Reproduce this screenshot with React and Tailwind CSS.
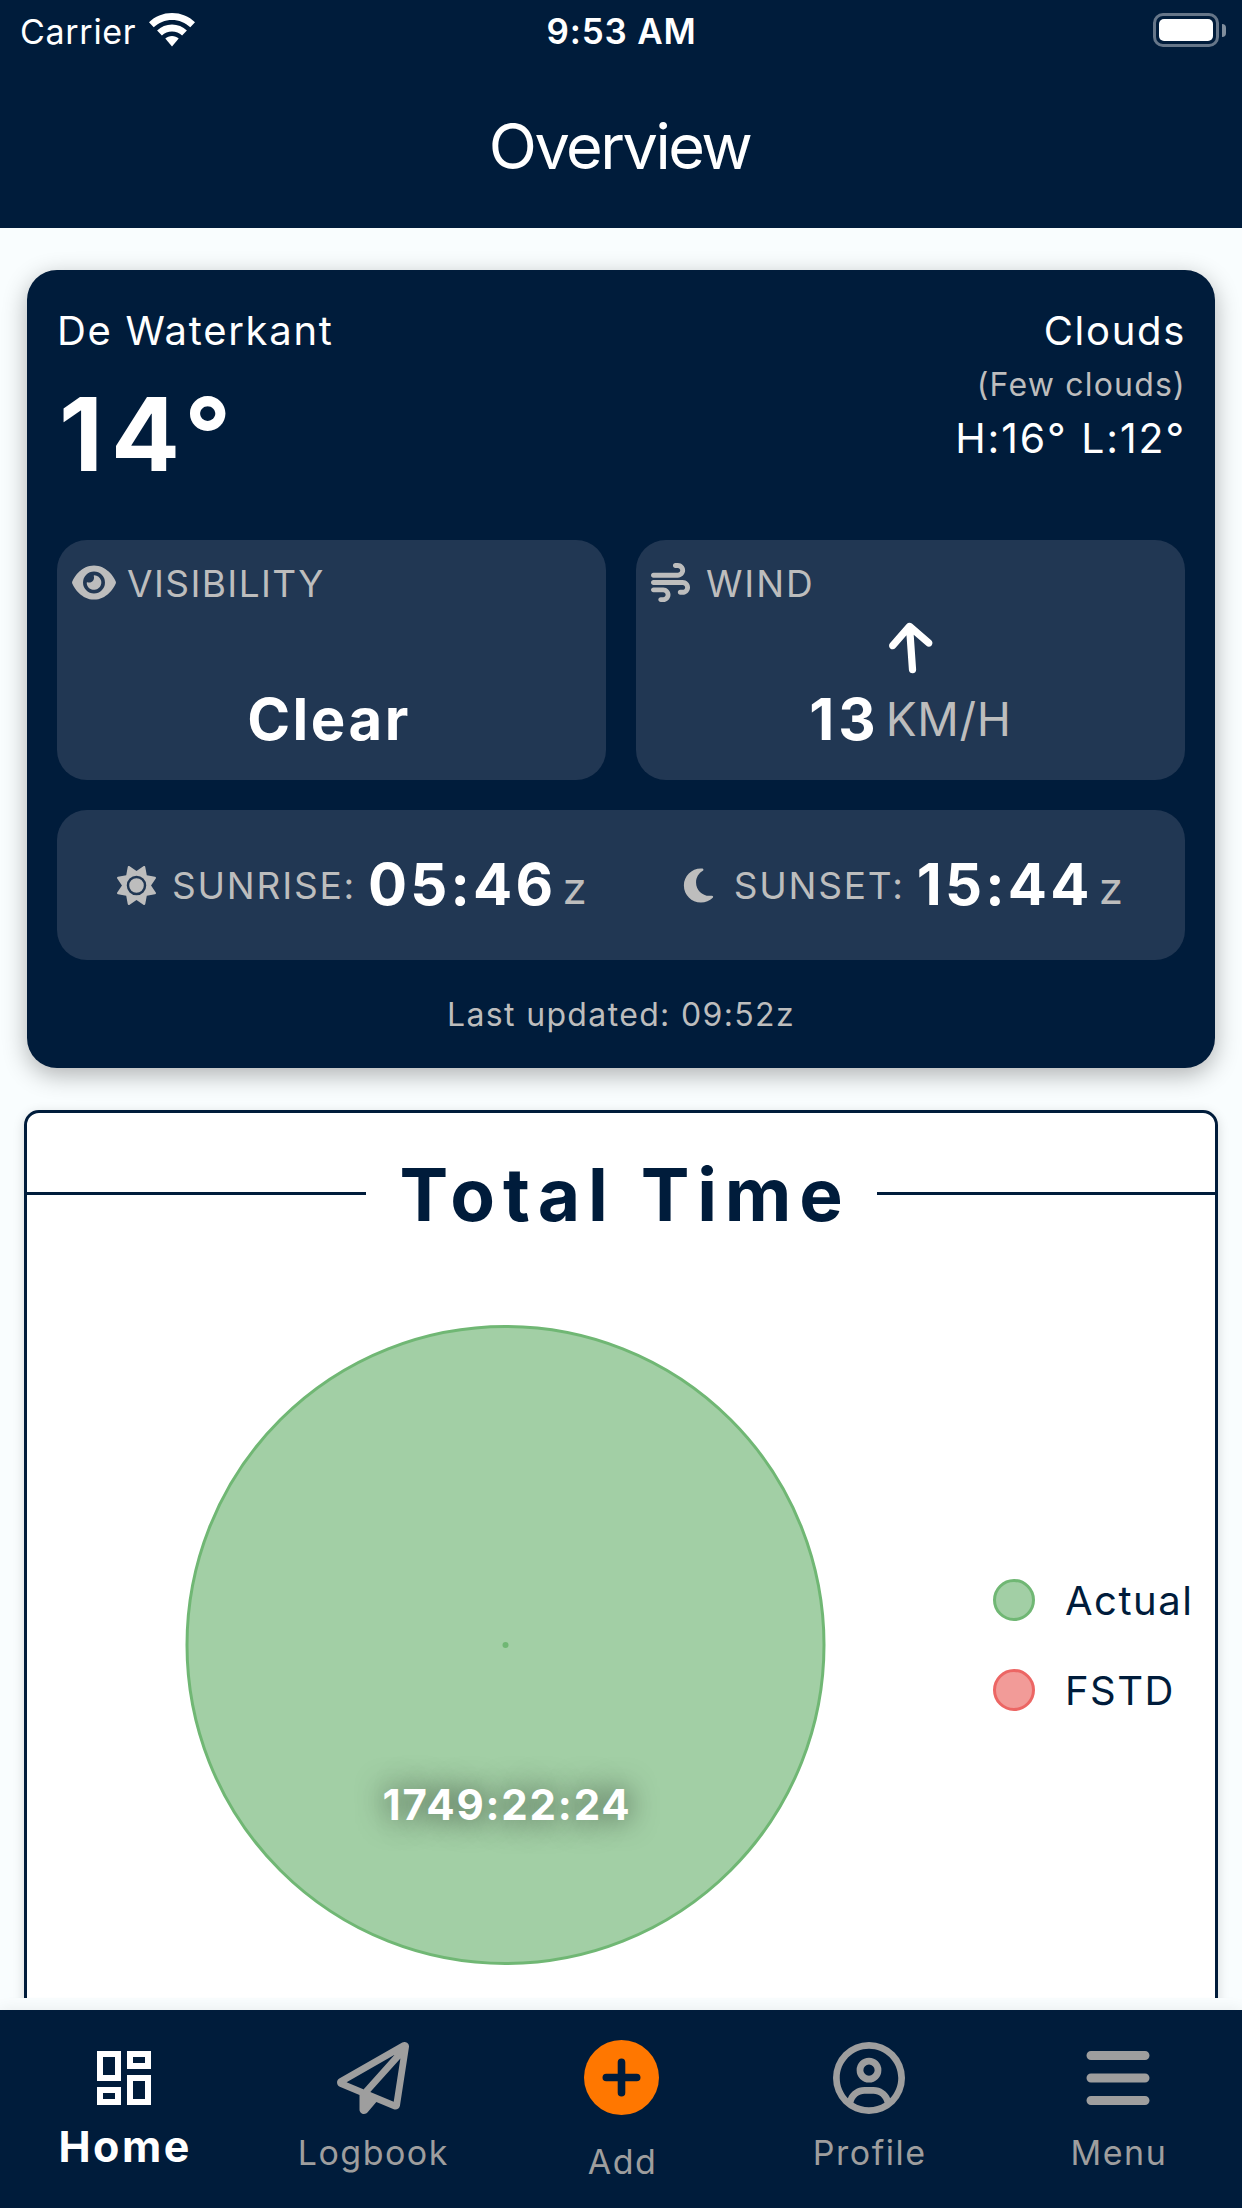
import { FaEye, FaWind, FaSun, FaMoon, FaRegPaperPlane, FaRegCircleUser, FaBars, FaArrowUp } from "react-icons/fa6";
import { MdOutlineDashboard } from "react-icons/md";

function AddIcon({ className }) {
  return (
    <svg viewBox="0 0 75 75" className={className}>
      <circle cx="37.500" cy="37.500" r="37.500" fill="#ff7700" />
      <path d="M37.500 22.300v30.400M22.300 37.500h30.400" stroke="#001c3b" strokeWidth="7.600" strokeLinecap="round" />
    </svg>
  );
}

const navItems = [
  { label: "Home", icon: MdOutlineDashboard, iconClass: "-ml-[2px] size-[72px]", labelClass: "text-[43px] font-bold tracking-[2.500px]", active: true },
  { label: "Logbook", icon: FaRegPaperPlane, iconClass: "size-[72px]", labelClass: "mt-[13px] text-[34px] tracking-[1.500px]" },
  { label: "Add", icon: AddIcon, iconClass: "-mt-[2px] size-[75px]", labelClass: "mt-[21px] pl-[2px] text-[34px] tracking-[1.500px]" },
  { label: "Profile", icon: FaRegCircleUser, iconClass: "-ml-[2px] size-[72px]", labelClass: "mt-[13px] text-[34px] tracking-[1.500px]" },
  { label: "Menu", icon: FaBars, iconClass: "size-[72px]", labelClass: "mt-[13px] pl-[2px] text-[34px] tracking-[1.500px]" },
];

const legend = [
  { label: "Actual", dot: "border-[#70b774] bg-[#a2cfa5]" },
  { label: "FSTD", dot: "border-[#ec6664] bg-[#f29b98]" },
];

function StatusBar() {
  return (
    <div className="flex h-[60px] items-center justify-between pl-[20px] pr-[16px] text-[34px]">
      <div className="flex w-[300px] items-center gap-[13px]">
        <span className="pt-[3px] tracking-[0.7px]">Carrier</span>
        <svg viewBox="0 0 46 34" className="h-[34px] w-[46px] fill-white">
          <path d="M23 0C14 0 6 3.400 0 9.300L4.700 14.300C9.600 9.600 16 7 23 7s13.400 2.600 18.300 7.300L46 9.300C40 3.400 32 0 23 0Z" />
          <path d="M23 11.500c-5.700 0-10.900 2.200-14.900 5.900l4.800 5c2.700-2.400 6.200-3.900 10.100-3.900s7.400 1.500 10.100 3.900l4.800-5c-4-3.700-9.200-5.900-14.900-5.900Z" />
          <path d="M23 23c-2.600 0-4.900 1-6.700 2.500L23 33.500l6.700-8C27.900 24 25.600 23 23 23Z" />
        </svg>
      </div>
      <span className="pt-[3px] pr-[3px] text-[35px] font-semibold tracking-[0.8px]">9:53 AM</span>
      <div className="flex w-[300px] items-center justify-end gap-[3px]">
        <div className="h-[34px] w-[66px] rounded-[10px] border-[3px] border-white/40 p-[3px]">
          <div className="h-full rounded-[5px] bg-white" />
        </div>
        <div className="h-[13px] w-[4px] rounded-r-full bg-white/50" />
      </div>
    </div>
  );
}

function SunTime({ icon: Icon, label, time }) {
  return (
    <div className="flex items-center">
      <Icon className="size-[39px] text-[#bdbdbd]" />
      <span className="ml-[16px] mt-[2px] text-[37px] tracking-[1.800px] text-[#bdbdbd]">{label}:</span>
      <span className="ml-[12px] -mt-[2px] text-[58px] font-bold tracking-[3.200px]">{time}</span>
      <span className="ml-[6px] mt-[6px] text-[44px] text-[#bdbdbd]">z</span>
    </div>
  );
}

function WeatherCard() {
  return (
    <section className="mx-[27px] h-[798px] rounded-[30px] bg-[#001c3b] px-[30px] text-white shadow-[0_7px_24px_rgba(0,0,0,0.3)]">
      <div className="flex h-[270px] justify-between pt-[34px]">
        <div>
          <p className="text-[40px] leading-[54px] tracking-[1.700px]">De Waterkant</p>
          <p className="mt-[16px] ml-[2px] text-[102px] leading-[120px] font-bold tracking-[8px]">14°</p>
        </div>
        <div className="-mr-[1px] text-right">
          <p className="text-[40px] leading-[54px] tracking-[1.700px]">Clouds</p>
          <p className="text-[32px] leading-[54px] tracking-[1.200px] text-[#bdbdbd]">(Few clouds)</p>
          <p className="-mt-[1px] text-[41px] leading-[54px] tracking-[1.900px]">H:16° L:12°</p>
        </div>
      </div>

      <div className="grid grid-cols-2 gap-[30px]">
        <div className="h-[240px] rounded-[30px] bg-[#213753] px-[15px] pt-[15px]">
          <div className="flex h-[54px] items-center text-[37px] tracking-[1.400px] text-[#bdbdbd]">
            <FaEye className="h-[39px] w-[44px]" />
            <span className="mt-[3px] ml-[11px]">VISIBILITY</span>
          </div>
          <p className="mt-[74px] mr-[5px] text-center text-[58px] leading-[72px] font-bold tracking-[2.500px]">Clear</p>
        </div>
        <div className="h-[240px] rounded-[30px] bg-[#213753] px-[15px] pt-[15px]">
          <div className="flex h-[54px] items-center text-[37px] tracking-[1.900px] text-[#bdbdbd]">
            <FaWind className="size-[39px]" />
            <span className="mt-[3px] ml-[16px]">WIND</span>
          </div>
          <FaArrowUp className="mx-auto mt-[10px] size-[58px] -rotate-4" />
          <div className="mt-[6px] flex items-center justify-center leading-[72px]">
            <span className="text-[58px] font-bold tracking-[4px]">13</span>
            <span className="ml-[6px] text-[46px] tracking-[0.700px] text-[#bdbdbd]">KM/H</span>
          </div>
        </div>
      </div>

      <div className="mt-[30px] flex h-[150px] items-center justify-between rounded-[30px] bg-[#213753] pr-[62px] pl-[60px]">
        <SunTime icon={FaSun} label="SUNRISE" time="05:46" />
        <SunTime icon={FaMoon} label="SUNSET" time="15:44" />
      </div>

      <p className="mt-[31px] text-center text-[32px] leading-[48px] tracking-[1.350px] text-[#bdbdbd]">Last updated: 09:52z</p>
    </section>
  );
}

function TotalTimeCard() {
  return (
    <section className="mx-[24px] mt-[42px] h-[960px] rounded-[15px] border-[3px] border-[#001c3b] bg-white text-[#001c3b] shadow-[0_3px_12px_rgba(0,0,0,0.15)]">
      <div className="mt-[32px] flex h-[97px] items-center">
        <div className="h-[3px] flex-1 bg-[#001c3b]" />
        <h2 className="w-[511px] pt-[3px] pl-[8px] text-center text-[73px] font-bold tracking-[7.800px]">Total Time</h2>
        <div className="h-[3px] flex-1 bg-[#001c3b]" />
      </div>
      <div className="flex">
        <svg viewBox="0 0 957 760" className="h-[760px] w-[957px] shrink-0">
          <circle cx="478.500" cy="403" r="318.500" fill="#a2cfa5" stroke="#70b774" strokeWidth="3" />
          <circle cx="478.500" cy="403" r="3" fill="#70b774" />
          <text
            x="480"
            y="578"
            textAnchor="middle"
            className="fill-white text-[42px] font-bold tracking-[1.800px] [text-shadow:0_0_30px_rgba(0,0,0,0.75)]"
          >
            1749:22:24
          </text>
        </svg>
        <div className="mt-[313px] ml-[9px] flex flex-col">
          {legend.map((item) => (
            <div key={item.label} className="flex h-[90px] items-center">
              <span className={`size-[42px] rounded-full border-[3px] ${item.dot}`} />
              <span className="ml-[30px] pt-[2px] text-[40px] tracking-[1.500px]">{item.label}</span>
            </div>
          ))}
        </div>
      </div>
    </section>
  );
}

function TabBar() {
  return (
    <nav className="grid h-[198px] grid-cols-5 bg-[#001c3b] pl-[1px] text-[#9e9e9e] shadow-[0_0_15px_rgba(0,0,0,0.08)]">
      {navItems.map(({ label, icon: Icon, iconClass, labelClass, active }) => (
        <div key={label} className={`flex flex-col items-center pt-[32px] ${active ? "text-white" : ""}`}>
          <Icon className={iconClass} />
          <span className={labelClass}>{label}</span>
        </div>
      ))}
    </nav>
  );
}

export default function App() {
  return (
    <div className="flex h-[2208px] w-[1242px] flex-col overflow-hidden bg-[#f9fdfe] font-['Inter',sans-serif]">
      <header className="h-[228px] shrink-0 bg-[#001c3b] text-white">
        <StatusBar />
        <h1 className="pt-[41px] pr-[3px] text-center text-[63px] leading-[90px] tracking-[-2.500px]">Overview</h1>
      </header>
      <main className="h-[1770px] shrink-0 overflow-hidden pt-[42px]">
        <WeatherCard />
        <TotalTimeCard />
      </main>
      <div className="mt-[12px] shrink-0">
        <TabBar />
      </div>
    </div>
  );
}
